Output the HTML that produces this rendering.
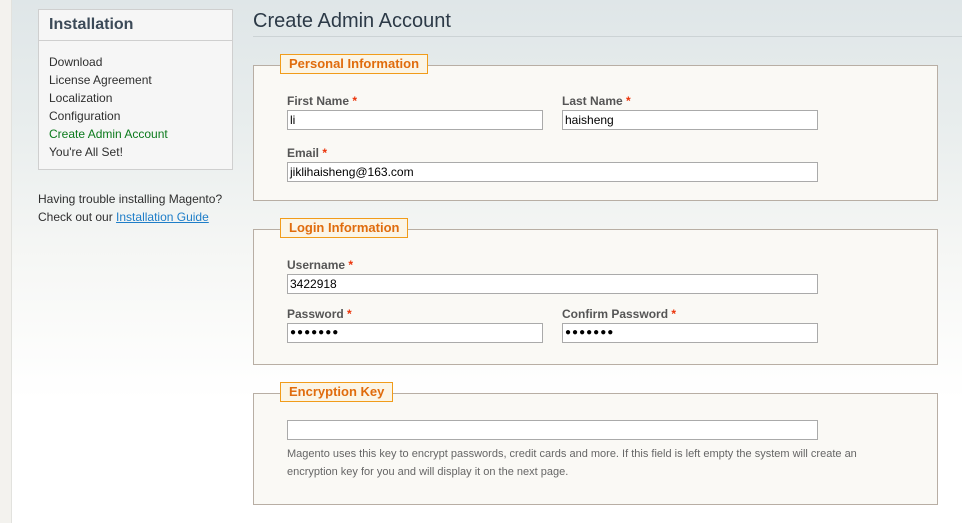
<!DOCTYPE html>
<html><head><style>
*{margin:0;padding:0;box-sizing:border-box}
body{width:962px;height:523px;overflow:hidden;font-family:"Liberation Sans",Arial,sans-serif;font-size:12px;color:#2f2f2f;position:relative;background:linear-gradient(180deg,#dfe6e8 0px,#e8eded 120px,#f6f7f5 260px,#fff 400px)}
.strip{position:absolute;left:0;top:0;width:12px;height:523px;background:#f3f2ee;border-right:1px solid #e2e2de}
.side{position:absolute;left:38px;top:9px;width:195px;height:161px;border:1px solid #cfcfcf;background:#f6f6f6}
.side h2{font-size:16px;color:#3c4a58;font-weight:bold;padding:6px 10px 0;height:31px;border-bottom:1px solid #cfcfcf}
.side ul{list-style:none;padding:12px 10px 0}
.side li{line-height:18px;color:#2f2f2f}
.side li.on{color:#0b7a1c}
.help{position:absolute;left:38px;top:190px;line-height:18px}
.help a{color:#1e7ec8;text-decoration:underline}
h1{position:absolute;left:253px;top:10px;font-size:20px;font-weight:normal;color:#2c3a47}
.hr{position:absolute;left:253px;top:36px;width:709px;border-top:1px solid #ccd3d5}
.fs{position:absolute;left:253px;width:685px;border:1px solid #b8aea4;background:#faf9f5}
.lg{position:absolute;left:26px;top:-12px;height:20px;border:1px solid #f19c1a;background:#fbf5e6;color:#e06c0d;font-weight:bold;font-size:13px;padding:1px 8px 0}
.lb{position:absolute;font-weight:bold;color:#555;font-size:12px}
.lb i{color:#eb340a;font-style:normal}
.in{position:absolute;height:20px;border:1px solid #aaa;background:#fff;font-size:12px;padding:2px 2px;color:#000}
.note{position:absolute;left:33px;top:51px;font-size:11px;color:#666;line-height:18px}
</style></head><body>
<div class="strip"></div>
<div class="side"><h2>Installation</h2><ul>
<li>Download</li><li>License Agreement</li><li>Localization</li><li>Configuration</li><li class="on">Create Admin Account</li><li>You're All Set!</li></ul></div>
<div class="help">Having trouble installing Magento?<br>Check out our <a>Installation Guide</a></div>
<h1>Create Admin Account</h1><div class="hr"></div>

<div class="fs" style="top:65px;height:136px">
<div class="lg">Personal Information</div>
<div class="lb" style="left:33px;top:28px">First Name <i>*</i></div>
<div class="lb" style="left:308px;top:28px">Last Name <i>*</i></div>
<div class="in" style="left:33px;top:44px;width:256px">li</div>
<div class="in" style="left:308px;top:44px;width:256px">haisheng</div>
<div class="lb" style="left:33px;top:80px">Email <i>*</i></div>
<div class="in" style="left:33px;top:96px;width:531px">jiklihaisheng@163.com</div>
</div>

<div class="fs" style="top:229px;height:136px">
<div class="lg">Login Information</div>
<div class="lb" style="left:33px;top:28px">Username <i>*</i></div>
<div class="in" style="left:33px;top:44px;width:531px">3422918</div>
<div class="lb" style="left:33px;top:77px">Password <i>*</i></div>
<div class="lb" style="left:308px;top:77px">Confirm Password <i>*</i></div>
<div class="in" style="left:33px;top:93px;width:256px;font-size:10px;letter-spacing:1px;padding-top:3px">●●●●●●●</div>
<div class="in" style="left:308px;top:93px;width:256px;font-size:10px;letter-spacing:1px;padding-top:3px">●●●●●●●</div>
</div>

<div class="fs" style="top:393px;height:112px">
<div class="lg">Encryption Key</div>
<div class="in" style="left:33px;top:26px;width:531px"></div>
<div class="note">Magento uses this key to encrypt passwords, credit cards and more. If this field is left empty the system will create an<br>encryption key for you and will display it on the next page.</div>
</div>
</body></html>
